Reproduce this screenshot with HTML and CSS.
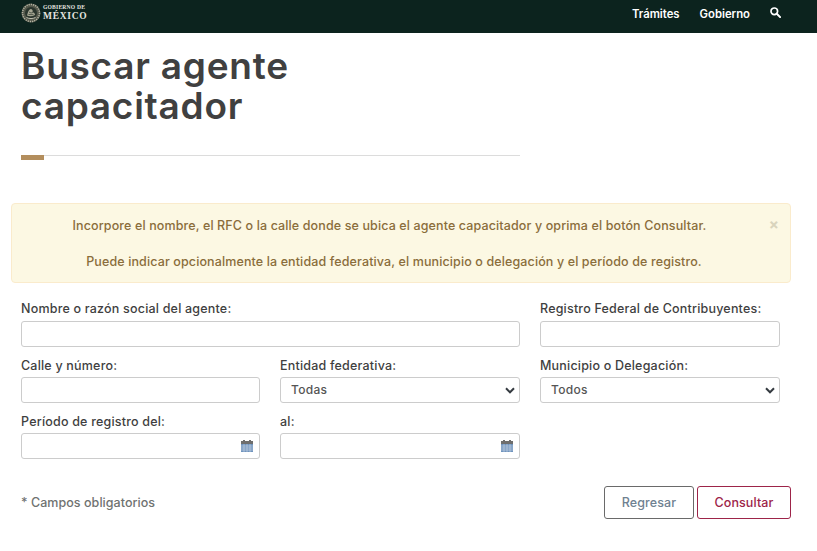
FILE: index.html
```html
<!DOCTYPE html>
<html lang="es">
<head>
<meta charset="utf-8">
<title>Buscar agente capacitador</title>
<link rel="stylesheet" href="styles.css">
</head>
<body>
<header class="navbar">
  <div class="brand">
    <svg class="seal" width="20" height="20" viewBox="0 0 20 20" aria-hidden="true">
      <circle cx="10" cy="10" r="9.500" fill="#55594c"/>
      <circle cx="10" cy="10" r="8.500" fill="none" stroke="#b4b4a4" stroke-width="1.500" stroke-dasharray="1.200 1"/>
      <circle cx="10" cy="10" r="6" fill="#2a352d"/>
      <path d="M6 12.500c1-3 1.500-6 4-6.500 1.500.5 2.200 1.500 1.500 3 1 .5 2.500 1.200 2.500 3-2.500 1.500-5.500 1.800-8 .5z" fill="#a8a894"/>
      <path d="M8 9l2 1 2-.5M7.500 11.500l5 .2" stroke="#2a352d" stroke-width=".7" fill="none"/>
      <path d="M5.500 14.500c2.800 1.400 6.200 1.400 9 0" stroke="#cfcebd" stroke-width=".9" fill="none"/>
    </svg>
    <div class="brand-text">
      <span class="brand-top">GOBIERNO DE</span>
      <span class="brand-main">MÉXICO</span>
    </div>
  </div>
  <nav class="nav-links">
    <a>Trámites</a>
    <a>Gobierno</a>
    <svg class="search" width="11" height="11" viewBox="0 0 11 11" aria-hidden="true">
      <circle cx="4.300" cy="4.300" r="3.300" fill="none" stroke="#fff" stroke-width="1.700"/>
      <path d="M6.800 6.800l3.300 3.300" stroke="#fff" stroke-width="2" stroke-linecap="round"/>
    </svg>
  </nav>
</header>

<main class="page">
  <div class="heading">
    <h1>Buscar agente<br>capacitador</h1>
    <div class="rule"><span class="rule-bar"></span></div>
  </div>

  <div class="alert">
    <p>Incorpore el nombre, el RFC o la calle donde se ubica el agente capacitador y oprima el botón Consultar.</p>
    <p class="alert-second">Puede indicar opcionalmente la entidad federativa, el municipio o delegación y el período de registro.</p>
    <span class="close">×</span>
  </div>

  <form class="form">
    <div class="field span-2">
      <label class="label-first">Nombre o razón social del agente:</label>
      <div class="control"></div>
    </div>
    <div class="field">
      <label class="label-first">Registro Federal de Contribuyentes:</label>
      <div class="control"></div>
    </div>
    <div class="field">
      <label>Calle y número:</label>
      <div class="control"></div>
    </div>
    <div class="field">
      <label>Entidad federativa:</label>
      <div class="control select">Todas
        <svg class="chevron" width="10" height="7" viewBox="0 0 10 7" aria-hidden="true"><path d="M1 1.300l4 4 4-4" fill="none" stroke="#343a40" stroke-width="2"/></svg>
      </div>
    </div>
    <div class="field">
      <label>Municipio o Delegación:</label>
      <div class="control select">Todos
        <svg class="chevron" width="10" height="7" viewBox="0 0 10 7" aria-hidden="true"><path d="M1 1.300l4 4 4-4" fill="none" stroke="#343a40" stroke-width="2"/></svg>
      </div>
    </div>
    <div class="field">
      <label>Período de registro del:</label>
      <div class="control date">
        <svg class="cal" width="12" height="12" viewBox="0 0 12 12" aria-hidden="true">
          <rect x="0" y="1" width="12" height="11" fill="#6f93bd"/>
          <rect x="0" y="1" width="12" height="3" fill="#6e6e6e"/>
          <rect x="2" y="0" width="2" height="2" fill="#6e6e6e"/>
          <rect x="8" y="0" width="2" height="2" fill="#6e6e6e"/>
          <path d="M0 6h12M0 8h12M0 10h12M3 4v8M6 4v8M9 4v8" stroke="#dfe5ec" stroke-width=".5"/>
        </svg>
      </div>
    </div>
    <div class="field">
      <label>al:</label>
      <div class="control date">
        <svg class="cal" width="12" height="12" viewBox="0 0 12 12" aria-hidden="true">
          <rect x="0" y="1" width="12" height="11" fill="#6f93bd"/>
          <rect x="0" y="1" width="12" height="3" fill="#6e6e6e"/>
          <rect x="2" y="0" width="2" height="2" fill="#6e6e6e"/>
          <rect x="8" y="0" width="2" height="2" fill="#6e6e6e"/>
          <path d="M0 6h12M0 8h12M0 10h12M3 4v8M6 4v8M9 4v8" stroke="#dfe5ec" stroke-width=".5"/>
        </svg>
      </div>
    </div>
  </form>

  <div class="footer-row">
    <span class="note">* Campos obligatorios</span>
    <div class="actions">
      <button type="button" class="btn btn-back">Regresar</button>
      <button type="button" class="btn btn-submit">Consultar</button>
    </div>
  </div>
</main>
</body>
</html>
```
FILE: styles.css
```css
* { box-sizing: border-box; }
html, body { margin: 0; padding: 0; }
body {
  background: #fff;
  color: #3f3f3f;
  font-family: "Inter", "Open Sans", sans-serif;
  overflow: hidden;
  height: 551px;
}
.navbar {
  height: 33px;
  background: #0c231e;
  display: flex;
  justify-content: space-between;
  align-items: flex-start;
  padding: 0 36px 0 21px;
}
.brand { display: flex; align-items: flex-start; gap: 2px; padding-top: 3px; }
.seal { display: block; }
.brand-text { display: flex; flex-direction: column; color: #e6e6e0; font-family: "Liberation Serif", serif; font-weight: 700; padding-top: 1px; }
.brand-top { font-size: 5.600px; line-height: 7px; letter-spacing: .2px; }
.brand-main { font-size: 9.500px; line-height: 10px; letter-spacing: .7px; }
.nav-links { display: flex; align-items: center; gap: 20px; padding-top: 6px; color: #fff; font-size: 11.300px; font-weight: 600; line-height: 16px; }
.search { margin-top: -4px; display: block; }
.page { padding: 0 26px 0 11px; }
.heading { width: 499px; margin-left: 10px; }
h1 {
  margin: 13px 0 0;
  font-size: 37px;
  line-height: 40px;
  font-weight: 600;
  color: #404040;
  letter-spacing: .75px;
}
.rule { height: 1px; background: #dcdcdc; margin-top: 29px; position: relative; }
.rule-bar { position: absolute; left: 0; top: 0; width: 23px; height: 5px; background: #b38e5d; }
.alert {
  position: relative;
  margin-top: 47px;
  height: 80px;
  background: #fcf8e3;
  border: 1px solid #faebcc;
  border-radius: 4px;
  color: #8a6d3b;
  text-align: center;
  font-size: 12.500px;
  font-weight: 500;
  letter-spacing: .12px;
  padding: 13px 23px 0 0;
}
.alert p { margin: 0 0 18px; line-height: 18px; }
.alert .alert-second { padding-left: 9px; }
.close { position: absolute; right: 11px; top: 12px; font-size: 15px; line-height: 18px; color: #d9d4bd; font-weight: 700; }
.form {
  display: grid;
  grid-template-columns: 239px 240px 240px;
  column-gap: 20px;
  row-gap: 9px;
  margin: 17px 0 0 10px;
}
.field { display: flex; flex-direction: column; }
.span-2 { grid-column: span 2; }
label { font-size: 12.500px; font-weight: 500; line-height: 18px; height: 21px; color: #3f3f3f; letter-spacing: .2px; padding-top: 1px; }
.label-first { padding-top: 0; }
.control {
  height: 26px;
  border: 1px solid #ccc;
  border-radius: 3px;
  background: #fff;
  position: relative;
}
.select { font-size: 12px; font-weight: 500; line-height: 24px; padding-left: 10px; color: #555; letter-spacing: .3px; }
.chevron { position: absolute; right: 4px; top: 9px; }
.cal { position: absolute; right: 6px; top: 6px; }
.footer-row {
  display: flex;
  justify-content: space-between;
  align-items: center;
  margin: 27px 0 0 10px;
}
.note { font-size: 12.500px; font-weight: 500; color: #6f7271; letter-spacing: .05px; }
.actions { display: flex; gap: 3px; }
.btn {
  height: 33px;
  background: #fff;
  border-radius: 3px;
  font-family: inherit;
  font-size: 12.500px;
  font-weight: 500;
  letter-spacing: .1px;
  padding: 0;
}
.btn-back { width: 90px; border: 1px solid #6a6a6a; color: #6f8191; }
.btn-submit { width: 94px; border: 1px solid #9d2449; color: #9d2449; }
```
